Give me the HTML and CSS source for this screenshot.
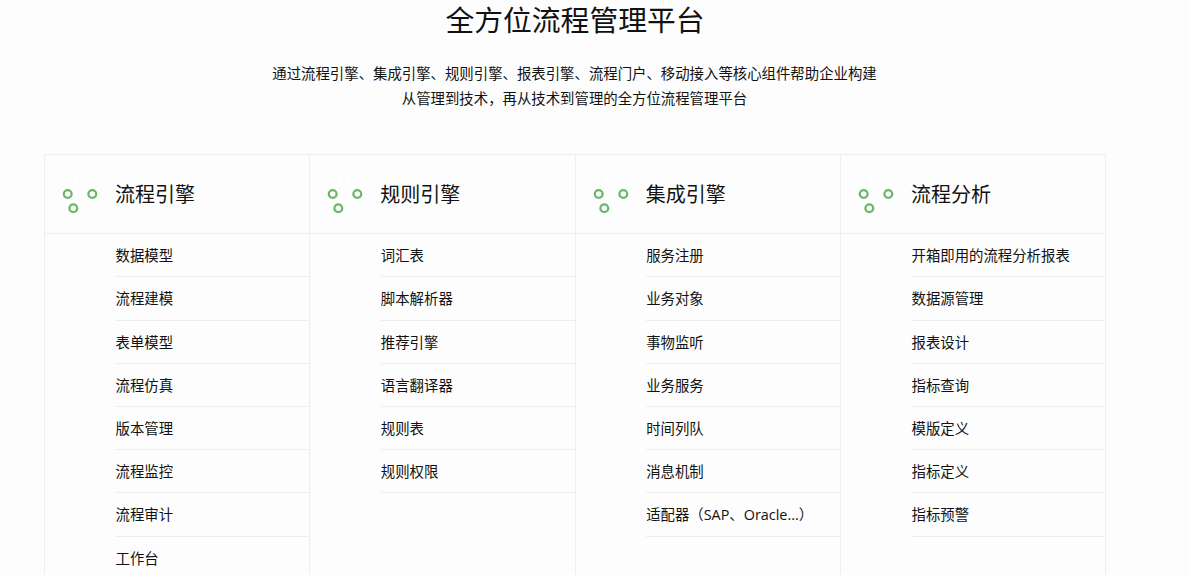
FILE: index.html
```html
<!DOCTYPE html>
<html lang="zh-CN">
<head>
<meta charset="utf-8">
<title>全方位流程管理平台</title>
<link rel="stylesheet" href="styles.css">
</head>
<body>
<section class="platform">
  <h1 class="title">全方位流程管理平台</h1>
  <p class="lead">通过流程引擎、集成引擎、规则引擎、报表引擎、流程门户、移动接入等核心组件帮助企业构建<br>从管理到技术，再从技术到管理的全方位流程管理平台</p>
  <div class="cards">
    <div class="card">
      <div class="card-head">
        <svg class="dots" viewBox="0 0 48 48" aria-hidden="true"><circle class="w" cx="25.3" cy="10" r="4.6"/><circle class="w" cx="7.7" cy="38" r="4.6"/><circle class="w" cx="32.7" cy="38" r="4.6"/><circle class="w" cx="43.3" cy="38" r="4.6"/><circle class="g" cx="13.7" cy="24" r="3.9"/><circle class="g" cx="38.3" cy="24" r="3.9"/><circle class="g" cx="19.3" cy="38.3" r="3.9"/></svg>
        <h2>流程引擎</h2>
      </div>
      <ul><li>数据模型</li><li>流程建模</li><li>表单模型</li><li>流程仿真</li><li>版本管理</li><li>流程监控</li><li>流程审计</li><li>工作台</li></ul>
    </div>
    <div class="card">
      <div class="card-head">
        <svg class="dots" viewBox="0 0 48 48" aria-hidden="true"><circle class="w" cx="25.3" cy="10" r="4.6"/><circle class="w" cx="7.7" cy="38" r="4.6"/><circle class="w" cx="32.7" cy="38" r="4.6"/><circle class="w" cx="43.3" cy="38" r="4.6"/><circle class="g" cx="13.7" cy="24" r="3.9"/><circle class="g" cx="38.3" cy="24" r="3.9"/><circle class="g" cx="19.3" cy="38.3" r="3.9"/></svg>
        <h2>规则引擎</h2>
      </div>
      <ul><li>词汇表</li><li>脚本解析器</li><li>推荐引擎</li><li>语言翻译器</li><li>规则表</li><li>规则权限</li></ul>
    </div>
    <div class="card">
      <div class="card-head">
        <svg class="dots" viewBox="0 0 48 48" aria-hidden="true"><circle class="w" cx="25.3" cy="10" r="4.6"/><circle class="w" cx="7.7" cy="38" r="4.6"/><circle class="w" cx="32.7" cy="38" r="4.6"/><circle class="w" cx="43.3" cy="38" r="4.6"/><circle class="g" cx="13.7" cy="24" r="3.9"/><circle class="g" cx="38.3" cy="24" r="3.9"/><circle class="g" cx="19.3" cy="38.3" r="3.9"/></svg>
        <h2>集成引擎</h2>
      </div>
      <ul><li>服务注册</li><li>业务对象</li><li>事物监听</li><li>业务服务</li><li>时间列队</li><li>消息机制</li><li>适配器（SAP、Oracle...）</li></ul>
    </div>
    <div class="card">
      <div class="card-head">
        <svg class="dots" viewBox="0 0 48 48" aria-hidden="true"><circle class="w" cx="25.3" cy="10" r="4.6"/><circle class="w" cx="7.7" cy="38" r="4.6"/><circle class="w" cx="32.7" cy="38" r="4.6"/><circle class="w" cx="43.3" cy="38" r="4.6"/><circle class="g" cx="13.7" cy="24" r="3.9"/><circle class="g" cx="38.3" cy="24" r="3.9"/><circle class="g" cx="19.3" cy="38.3" r="3.9"/></svg>
        <h2>流程分析</h2>
      </div>
      <ul><li>开箱即用的流程分析报表</li><li>数据源管理</li><li>报表设计</li><li>指标查询</li><li>模版定义</li><li>指标定义</li><li>指标预警</li></ul>
    </div>
  </div>
</section>
</body>
</html>
```
FILE: styles.css
```css
* { box-sizing: border-box; }
html, body { margin: 0; height: 100%; overflow: hidden; }
body {
  background: #fdfdfd;
  color: #111;
  font-family: "Open Sans", "Noto Sans CJK SC", sans-serif;
}
.platform { width: 1149px; }
.title {
  margin: 0;
  font-size: 28.8px;
  line-height: 40px;
  font-weight: 400;
  text-align: center;
  padding-left: 1px;
}
.lead {
  margin: 21px 0 0;
  font-size: 14.4px;
  line-height: 25px;
  text-align: center;
}
.cards {
  display: grid;
  grid-template-columns: repeat(4, 265.33px);
  margin: 43px 0 0 44px;
  width: 1062px;
  border-top: 1px solid #eee;
  border-left: 1px solid #eee;
  height: 500px;
}
.card { border-right: 1px solid #eee; }
.card-head {
  height: 79.2px;
  display: flex;
  align-items: center;
  border-bottom: 1px solid #eee;
}
.dots { width: 48px; height: 48px; margin: 0 0 0 9px; flex: none; overflow: visible; }
.dots circle { fill: none; stroke-width: 2.3; }
.dots .w { stroke: #fff; }
.dots .g { stroke: #6ab86a; }
.card-head h2 {
  margin: 2px 0 0 13px;
  font-size: 20px;
  font-weight: 400;
  line-height: 28px;
}
.card ul { list-style: none; margin: 0; padding: 0 0 0 70.5px; }
.card li {
  height: 43.2px;
  line-height: 43.8px;
  font-size: 14.4px;
  border-bottom: 1px solid #eee;
}
```
